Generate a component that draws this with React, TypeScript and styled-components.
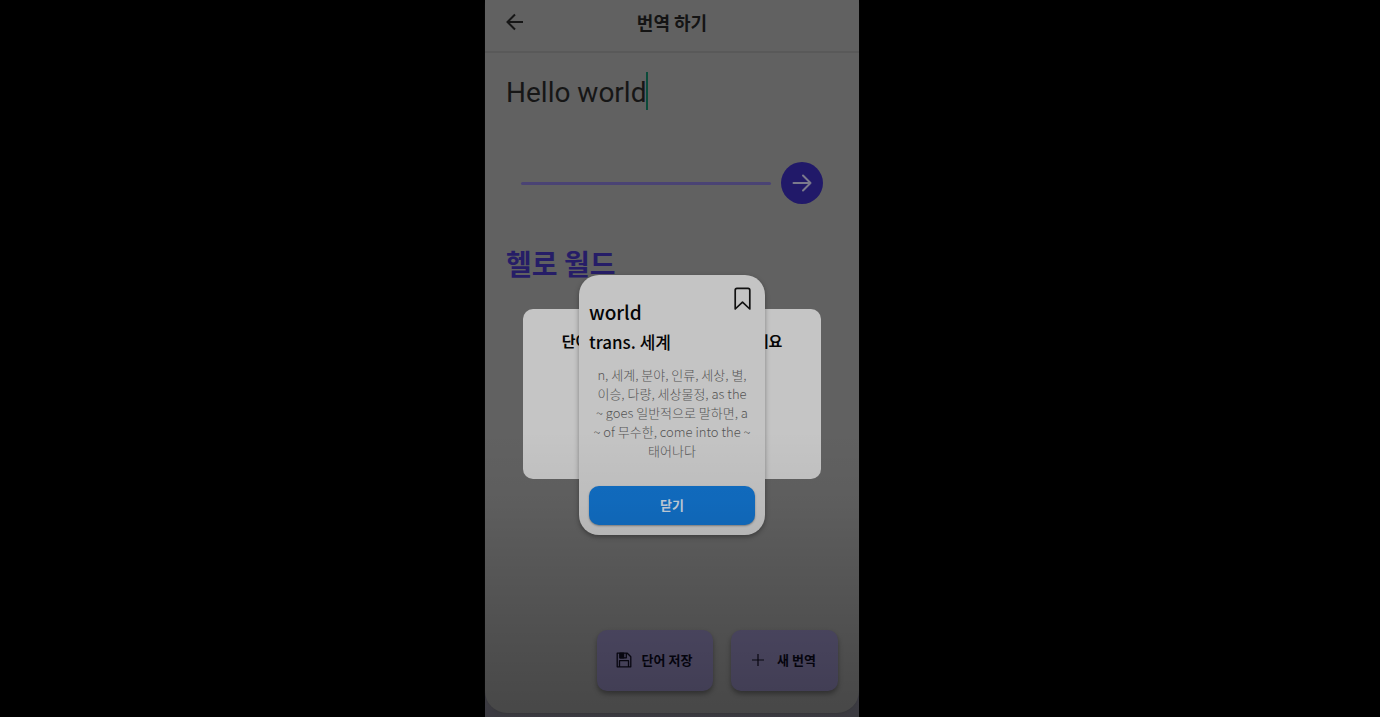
import React, { useState } from "react";
import styled, { createGlobalStyle } from "styled-components";

const GlobalStyle = createGlobalStyle`
  *, *::before, *::after { box-sizing: border-box; }
  body {
    margin: 0;
    background: #000;
    font-family: "Noto Sans CJK KR", "Noto Sans", sans-serif;
  }
  h1, h2, h3, p { margin: 0; }
  button { font-family: inherit; border: 0; padding: 0; cursor: pointer; }
`;

const Stage = styled.div`
  display: flex;
  justify-content: center;
  min-height: 100vh;
  padding-right: 36px;
`;

const Device = styled.div`
  position: relative;
  display: flex;
  flex-direction: column;
  width: 100%;
  max-width: 374px;
  padding-bottom: 4px;
  background: #504f58;
`;

const Screen = styled.main`
  flex: 1;
  display: flex;
  flex-direction: column;
  background: #616161;
  border-radius: 0 0 22px 22px;
  box-shadow: 0 2px 2px -1px #4a4a4e;
`;

const Header = styled.header`
  display: grid;
  grid-template-columns: 60px 1fr 60px;
  align-items: center;
  height: 53px;
  padding-bottom: 8px;
  border-bottom: 2px solid #595959;
`;

const BackButton = styled.button`
  display: flex;
  justify-content: center;
  background: none;
`;

const Title = styled.h1`
  text-align: center;
  font-size: 18px;
  line-height: 26px;
  font-weight: 700;
  color: #141414;
`;

const SourceRow = styled.div`
  display: flex;
  align-items: center;
  height: 38px;
  margin: 19px 21px 0;
`;

const SourceInput = styled.input`
  field-sizing: content;
  height: 38px;
  border: 0;
  padding: 3px 0 0;
  outline: 0;
  background: none;
  font-family: Roboto, sans-serif;
  font-size: 28px;
  line-height: 34px;
  color: #161616;
`;

const Caret = styled.span`
  width: 2px;
  height: 38px;
  background: #0c4b3a;
`;

const DividerRow = styled.div`
  display: flex;
  align-items: center;
  gap: 10px;
  margin: 52px 36px 0;
`;

const Divider = styled.hr`
  flex: 1;
  height: 3px;
  margin: 0;
  border: 0;
  border-radius: 2px;
  background: #4a4374;
`;

const TranslateButton = styled.button`
  display: flex;
  align-items: center;
  justify-content: center;
  width: 42px;
  height: 42px;
  border-radius: 50%;
  background: #211969;
`;

const Result = styled.h2`
  margin: 39px 21px 0;
  font-size: 28px;
  line-height: 40px;
  font-weight: 700;
  color: #261d67;
`;

const HintCard = styled.section`
  height: 170px;
  margin: 26px 38px 0;
  padding-top: 20px;
  border-radius: 10px;
  background: #c5c5c5;
  text-align: center;
  font-size: 15px;
  line-height: 24px;
  font-weight: 700;
  color: #060606;
`;

const Actions = styled.div`
  display: flex;
  justify-content: flex-end;
  gap: 18px;
  margin-top: auto;
  padding: 20px 21px 22px;
`;

const ActionButton = styled.button<{ $wide?: boolean }>`
  display: flex;
  align-items: center;
  justify-content: center;
  gap: ${(p) => (p.$wide ? 10 : 12)}px;
  width: ${(p) => (p.$wide ? 116 : 107)}px;
  height: 61px;
  padding: 0 2px 2px 0;
  border-radius: 10px;
  background: #575270;
  box-shadow: 0 3px 5px rgba(0, 0, 0, 0.35);
  font-size: 13px;
  font-weight: 700;
  color: #060510;
`;

const Overlay = styled.div`
  position: absolute;
  inset: 0;
  display: grid;
  place-items: center;
  padding-top: 93px;
`;

const Dialog = styled.section`
  display: flex;
  flex-direction: column;
  width: 186px;
  padding: 12px 10px 10px;
  border-radius: 20px;
  background: #c4c4c4;
  box-shadow: 0 2px 5px rgba(0, 0, 0, 0.35);
`;

const BookmarkButton = styled.button`
  display: flex;
  align-self: flex-end;
  margin-right: 4px;
  background: none;
`;

const Word = styled.h2`
  margin-top: -14px;
  font-size: 19px;
  line-height: 30px;
  font-weight: 500;
  color: #050505;
`;

const Meaning = styled.h3`
  font-size: 17px;
  line-height: 30px;
  font-weight: 500;
  color: #050505;
`;

const Definition = styled.p`
  padding: 8px 4px 26px;
  text-align: center;
  font-size: 13px;
  line-height: 19px;
  font-weight: 300;
  color: #545454;
`;

const CloseButton = styled.button`
  height: 39px;
  padding-bottom: 2px;
  border-radius: 10px;
  background: #116dc2;
  box-shadow: 0 1px 2px rgba(0, 0, 0, 0.35);
  font-size: 13px;
  font-weight: 700;
  color: #c3cfdb;
`;

const Shade = styled.div`
  position: absolute;
  inset: 60% 0 0;
  background: linear-gradient(transparent, rgba(0, 0, 0, 0.04) 25%, rgba(0, 0, 0, 0.27));
  pointer-events: none;
`;

export default function App() {
  const [text, setText] = useState("Hello world");
  return (
    <>
      <GlobalStyle />
      <Stage>
        <Device>
          <Screen>
            <Header>
              <BackButton aria-label="뒤로">
                <svg width="18" height="18" viewBox="0 0 18 18" fill="none" stroke="#161616" strokeWidth="2">
                  <path d="M17 9H2M9 1.5L1.5 9L9 16.5" />
                </svg>
              </BackButton>
              <Title>번역 하기</Title>
            </Header>
            <SourceRow>
              <SourceInput aria-label="번역할 문장" value={text} onChange={(e) => setText(e.target.value)} />
              <Caret />
            </SourceRow>
            <DividerRow>
              <Divider />
              <TranslateButton aria-label="번역">
                <svg width="20" height="18" viewBox="0 0 20 18" fill="none" stroke="#7b7a8c" strokeWidth="2" strokeLinecap="round" strokeLinejoin="round">
                  <path d="M1.5 9H18.5M11 1.5L18.5 9L11 16.5" />
                </svg>
              </TranslateButton>
            </DividerRow>
            <Result>헬로 월드</Result>
            <HintCard>단어를 클릭해서 뜻을 확인해 보세요</HintCard>
            <Actions>
              <ActionButton $wide>
                <svg width="16" height="16" viewBox="0 0 16 16" fill="none" stroke="#0a0814" strokeWidth="1.3" strokeLinejoin="round">
                  <path d="M1.2 1.2H11.3L14.8 4.7V14.8H1.2ZM3.5 14.8V8.7H12.5V14.8M4 1.2V5.8H10.3V1.2" />
                  <path d="M4 1.2H7.6V5.8H4Z" fill="#0a0814" />
                </svg>
                단어 저장
              </ActionButton>
              <ActionButton>
                <svg width="14" height="14" viewBox="0 0 14 14" fill="none" stroke="#0a0814" strokeWidth="1.2">
                  <path d="M7 1V13M1 7H13" />
                </svg>
                새 번역
              </ActionButton>
            </Actions>
          </Screen>
          <Overlay>
            <Dialog role="dialog" aria-label="world">
              <BookmarkButton aria-label="북마크">
                <svg width="17" height="24" viewBox="0 0 17 24" fill="none" stroke="#111" strokeWidth="1.7" strokeLinejoin="round">
                  <path d="M1.2 22V3.2Q1.2 1.4 3 1.4H14Q15.8 1.4 15.8 3.2V22L8.5 15.2Z" />
                </svg>
              </BookmarkButton>
              <Word>world</Word>
              <Meaning>trans. 세계</Meaning>
              <Definition>
                n, 세계, 분야, 인류, 세상, 별, 이승, 다량, 세상물정, as the ~ goes 일반적으로 말하면, a ~ of 무수한, come into the ~ 태어나다
              </Definition>
              <CloseButton>닫기</CloseButton>
            </Dialog>
          </Overlay>
          <Shade />
        </Device>
      </Stage>
    </>
  );
}
